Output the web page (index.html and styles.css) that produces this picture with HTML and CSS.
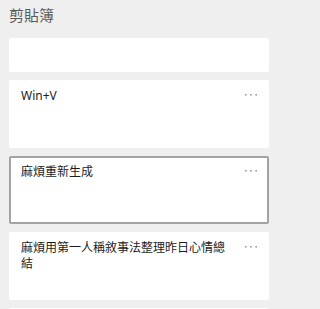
FILE: index.html
```html
<!DOCTYPE html>
<html lang="zh-Hant">
<head>
<meta charset="utf-8">
<title>剪貼簿</title>
<link rel="stylesheet" href="styles.css">
</head>
<body>
<div class="panel">
  <header class="head">剪貼簿</header>
  <div class="list">
    <div class="card card-clipped"></div>
    <div class="card">
      <div class="text">Win+V</div>
      <svg class="more" width="12" height="2" viewBox="0 0 12 2"><rect x="0" y="0" width="1.6" height="1.6" fill="#9a9a9a"/><rect x="5.2" y="0" width="1.6" height="1.6" fill="#9a9a9a"/><rect x="10.4" y="0" width="1.6" height="1.6" fill="#9a9a9a"/></svg>
    </div>
    <div class="card card-selected">
      <div class="text">麻煩重新生成</div>
      <svg class="more" width="12" height="2" viewBox="0 0 12 2"><rect x="0" y="0" width="1.6" height="1.6" fill="#9a9a9a"/><rect x="5.2" y="0" width="1.6" height="1.6" fill="#9a9a9a"/><rect x="10.4" y="0" width="1.6" height="1.6" fill="#9a9a9a"/></svg>
    </div>
    <div class="card">
      <div class="text">麻煩用第一人稱敘事法整理昨日心情總結</div>
      <svg class="more" width="12" height="2" viewBox="0 0 12 2"><rect x="0" y="0" width="1.6" height="1.6" fill="#9a9a9a"/><rect x="5.2" y="0" width="1.6" height="1.6" fill="#9a9a9a"/><rect x="10.4" y="0" width="1.6" height="1.6" fill="#9a9a9a"/></svg>
    </div>
    <div class="card"></div>
  </div>
</div>
</body>
</html>
```
FILE: styles.css
```css
html, body {
  margin: 0;
  padding: 0;
}
body {
  background: #efefef;
  font-family: "Noto Sans", "Noto Sans CJK TC", sans-serif;
  color: #1a1a1a;
}
.panel {
  width: 277px;
  height: 309px;
  overflow: hidden;
  display: flex;
  flex-direction: column;
  background: #efefef;
}
.head {
  height: 38px;
  flex: none;
  box-sizing: border-box;
  padding: 5px 0 0 9px;
  font-family: "Noto Sans CJK TC", sans-serif;
  font-size: 15px;
  line-height: 20px;
  color: #5c5c5c;
}
.list {
  flex: 1;
  min-height: 0;
  overflow: hidden;
  display: flex;
  flex-direction: column;
  gap: 8px;
  padding: 0 8px 0 9px;
}
.card {
  box-sizing: border-box;
  height: 68px;
  flex: none;
  background: #ffffff;
  border-radius: 2px;
  padding: 8px 12px 8px 12px;
  display: flex;
  align-items: flex-start;
  gap: 12px;
}
.card-clipped {
  height: 34px;
}
.card-selected {
  border: 2px solid #a3a3a3;
  padding: 6px 10px;
}
.text {
  flex: 1;
  font-size: 12px;
  line-height: 16px;
  color: #1c1c1c;
  font-family: "Noto Sans", "Noto Sans CJK TC", sans-serif;
}
.more {
  flex: none;
  margin-top: 6px;
}
```
